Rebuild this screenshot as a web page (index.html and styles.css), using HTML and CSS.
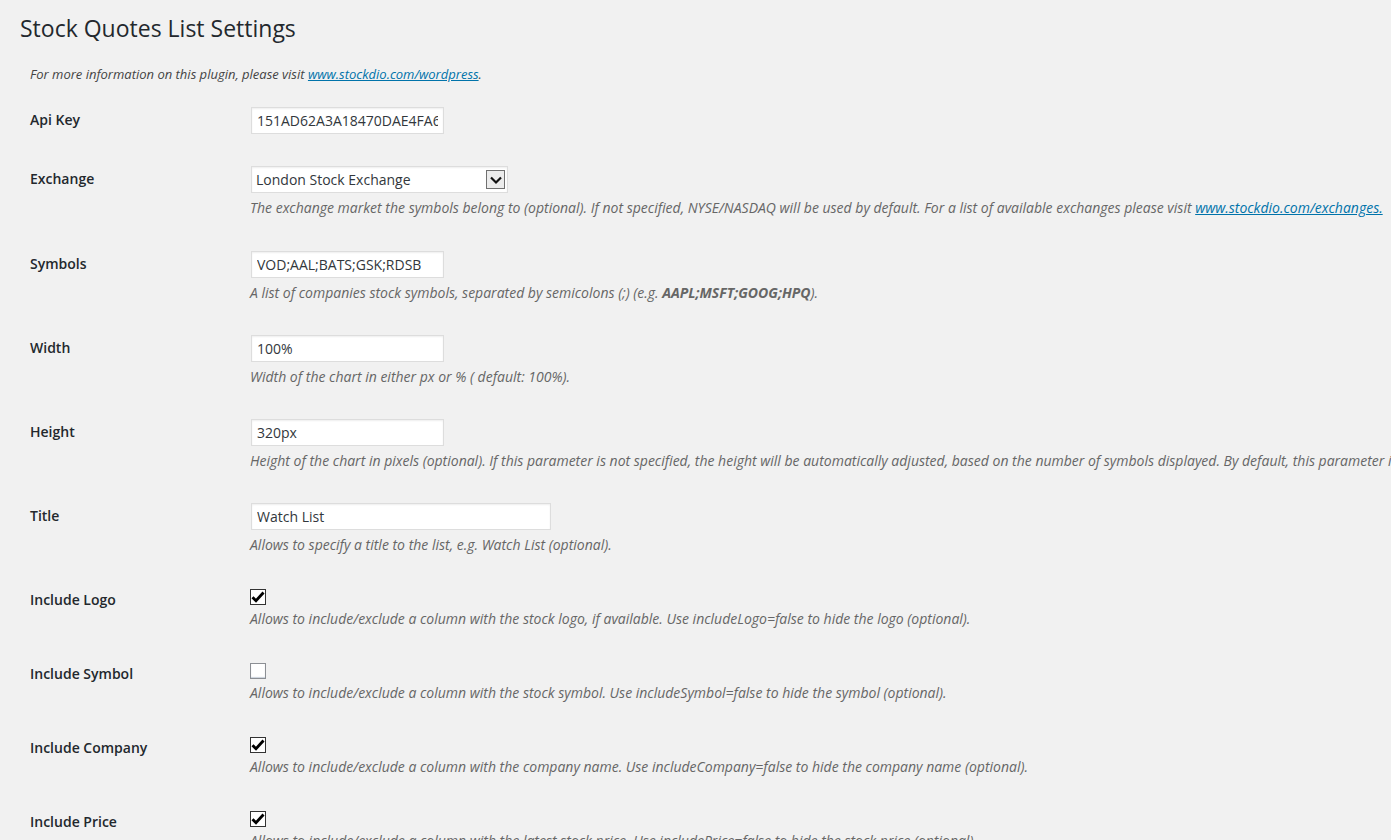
FILE: index.html
```html
<!DOCTYPE html>
<html lang="en">
<head>
<meta charset="utf-8">
<title>Stock Quotes List Settings</title>
<link rel="stylesheet" href="styles.css">
</head>
<body>
<div class="wrap">
  <h1 class="page-title">Stock Quotes List Settings</h1>
  <div class="panel">
    <p class="info">For more information on this plugin, please visit <a href="#">www.stockdio.com/wordpress</a>.</p>
    <table class="form-table">
      <tr class="row-plain">
        <th>Api Key</th>
        <td><input type="text" class="field field-short" value="151AD62A3A18470DAE4FA6B2C4E8D1F3"></td>
      </tr>
      <tr class="row-select">
        <th>Exchange</th>
        <td>
          <div class="select-wrap">
            <select class="field field-select"><option>London Stock Exchange</option></select>
            <span class="select-btn"><svg width="14" height="10" viewBox="0 0 14 10"><path d="M2 2.5 L7 7.5 L12 2.5" fill="none" stroke="#111" stroke-width="2.2"/></svg></span>
          </div>
          <p class="description">The exchange market the symbols belong to (optional). If not specified, NYSE/NASDAQ will be used by default. For a list of available exchanges please visit <a href="#">www.stockdio.com/exchanges.</a></p>
        </td>
      </tr>
      <tr>
        <th>Symbols</th>
        <td><input type="text" class="field field-short" value="VOD;AAL;BATS;GSK;RDSB">
          <p class="description">A list of companies stock symbols, separated by semicolons (;) (e.g. <b>AAPL;MSFT;GOOG;HPQ</b>).</p></td>
      </tr>
      <tr>
        <th>Width</th>
        <td><input type="text" class="field field-short" value="100%">
          <p class="description">Width of the chart in either px or % ( default: 100%).</p></td>
      </tr>
      <tr>
        <th>Height</th>
        <td><input type="text" class="field field-short" value="320px">
          <p class="description">Height of the chart in pixels (optional). If this parameter is not specified, the height will be automatically adjusted, based on the number of symbols displayed. By default, this parameter is not specified.</p></td>
      </tr>
      <tr>
        <th>Title</th>
        <td><input type="text" class="field field-long" value="Watch List">
          <p class="description">Allows to specify a title to the list, e.g. Watch List (optional).</p></td>
      </tr>
      <tr class="row-check">
        <th>Include Logo</th>
        <td><span class="cb cb-on"><svg width="14" height="14" viewBox="0 0 14 14"><path d="M1.5 7.2 L5 10.8 L12.5 2.5" fill="none" stroke="#000" stroke-width="2.8"/></svg></span>
          <p class="description">Allows to include/exclude a column with the stock logo, if available. Use includeLogo=false to hide the logo (optional).</p></td>
      </tr>
      <tr class="row-check">
        <th>Include Symbol</th>
        <td><span class="cb cb-off"></span>
          <p class="description">Allows to include/exclude a column with the stock symbol. Use includeSymbol=false to hide the symbol (optional).</p></td>
      </tr>
      <tr class="row-check">
        <th>Include Company</th>
        <td><span class="cb cb-on"><svg width="14" height="14" viewBox="0 0 14 14"><path d="M1.5 7.2 L5 10.8 L12.5 2.5" fill="none" stroke="#000" stroke-width="2.8"/></svg></span>
          <p class="description">Allows to include/exclude a column with the company name. Use includeCompany=false to hide the company name (optional).</p></td>
      </tr>
      <tr class="row-check">
        <th>Include Price</th>
        <td><span class="cb cb-on"><svg width="14" height="14" viewBox="0 0 14 14"><path d="M1.5 7.2 L5 10.8 L12.5 2.5" fill="none" stroke="#000" stroke-width="2.8"/></svg></span>
          <p class="description">Allows to include/exclude a column with the latest stock price. Use includePrice=false to hide the stock price (optional).</p></td>
      </tr>
    </table>
  </div>
</div>
</body>
</html>
```

FILE: styles.css
```css
html {
  overflow: hidden;
  background: #f1f1f1;
}
body {
  margin: 0;
  background: #f1f1f1;
  color: #444;
  font-family: "Open Sans", "Noto Sans", sans-serif;
  font-size: 13px;
}
.wrap {
  padding: 0 20px;
}
.page-title {
  margin: 0;
  padding-top: 14px;
  font-size: 23px;
  line-height: 29px;
  font-weight: 400;
  color: #23282d;
}
.panel {
  padding-left: 10px;
}
.info {
  margin: 21px 0 0;
  font-size: 13px;
  line-height: 20px;
  font-style: italic;
  color: #444;
}
a {
  color: #0073aa;
  text-decoration: underline;
}
.form-table {
  border-collapse: collapse;
  margin-top: 7px;
  white-space: nowrap;
  width: max-content;
}
.form-table th {
  width: 200px;
  min-width: 200px;
  padding: 20px 10px 0 0;
  text-align: left;
  vertical-align: top;
  font-size: 14px;
  line-height: 18px;
  font-weight: 600;
  color: #23282d;
}
.form-table td {
  padding: 15px 10px 16px 10px;
  vertical-align: top;
}
.form-table .row-plain td {
  padding-bottom: 15px;
}
.field {
  box-sizing: border-box;
  height: 27px;
  margin: 1px;
  padding: 0 5px;
  border: 1px solid #ddd;
  background: #fff;
  box-shadow: inset 0 1px 2px rgba(0, 0, 0, .07);
  font-family: "Open Sans", "Noto Sans", sans-serif;
  font-size: 14px;
  color: #32373c;
  display: block;
  outline: none;
}
.field-short { width: 193px; }
.field-long { width: 300px; }
.select-wrap {
  position: relative;
  width: 259px;
}
.field-select {
  width: 257px;
  padding: 0 4px;
  -webkit-appearance: none;
  appearance: none;
  border-radius: 0;
}
.select-btn {
  position: absolute;
  top: 4px;
  right: 4px;
  width: 19px;
  height: 19px;
  box-sizing: border-box;
  border: 1px solid #707070;
  background: #ececec;
  display: flex;
  align-items: center;
  justify-content: center;
  pointer-events: none;
}
.form-table .row-select td {
  padding-bottom: 17px;
}
.description {
  margin: 4px 0 0;
  font-size: 14px;
  line-height: 21px;
  font-style: italic;
  color: #666;
}
.description b {
  font-weight: 700;
}
.form-table .row-check td {
  padding-top: 18px;
  padding-bottom: 16px;
}
.row-check .description {
  margin-top: 3px;
}
.cb {
  box-sizing: border-box;
  width: 16px;
  height: 16px;
  display: flex;
  align-items: center;
  justify-content: center;
  background: #fff;
}
.cb-on {
  border: 1px solid #333;
}
.cb-off {
  border: 1px solid #8c8f94;
  box-shadow: inset 0 -1px 1px rgba(40, 70, 110, .25);
}
```
